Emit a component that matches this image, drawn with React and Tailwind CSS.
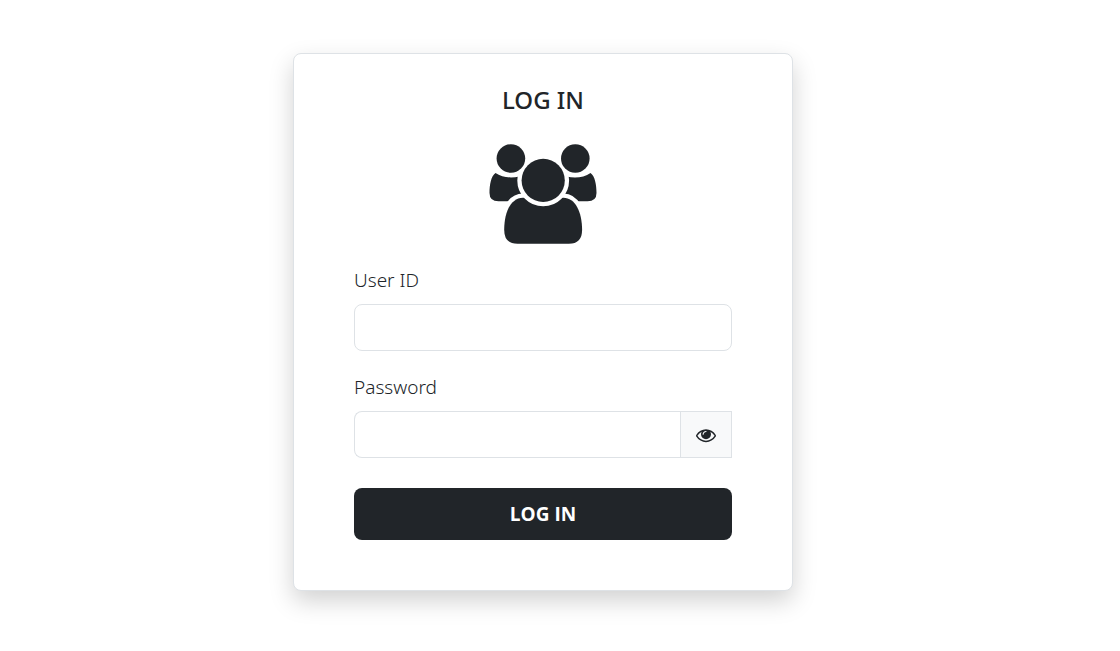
import { useState } from "react";

function UsersLogo() {
  return (
    <svg viewBox="0 0 108 100" className="mx-auto block h-[100px] w-[108px]" fill="currentColor" aria-hidden="true">
      <path d="M6.5 29C2 32 .5 41 .5 49Q.5 57.3 9.5 57.3H40V29H37.5C29 35 15 35 6.5 29Z" />
      <path d="M101.5 29C106 32 107.5 41 107.5 49Q107.5 57.3 98.5 57.3H68V29H70.5C79 35 93 35 101.5 29Z" />
      <g stroke="white" strokeWidth="8.6">
        <circle cx="21.9" cy="14.5" r="14.3" />
        <circle cx="86.3" cy="14.5" r="14.3" />
        <path paintOrder="stroke" d="M34 53.7C22 53.7 15.2 68 15.2 86Q15.2 99.8 28.5 99.8H79.8Q93.1 99.8 93.1 86C93.1 68 86.3 53.7 74.3 53.7Z" />
        <circle cx="54.2" cy="36.4" r="21.6" />
      </g>
      <circle cx="21.9" cy="14.5" r="14.3" />
      <circle cx="86.3" cy="14.5" r="14.3" />
      <circle cx="54.2" cy="36.4" r="21.6" />
    </svg>
  );
}

function EyeIcon() {
  return (
    <svg viewBox="0 0 1792 1792" className="size-5" fill="currentColor" aria-hidden="true">
      <path d="M1664 960q-152-236-381-353 61 104 61 225 0 185-131.5 316.5t-316.5 131.5-316.5-131.5-131.5-316.5q0-121 61-225-229 117-381 353 133 205 333.5 326.5t434.5 121.5 434.5-121.5 333.5-326.5zm-720-384q0-20-14-34t-34-14q-125 0-214.5 89.5t-89.5 214.5q0 20 14 34t34 14 34-14 14-34q0-86 61-147t147-61q20 0 34-14t14-34zm848 384q0 34-20 69-140 230-376.5 368.5t-499.5 138.5-499.5-139-376.5-368q-20-35-20-69t20-69q140-229 376.5-368t499.5-139 499.5 139 376.5 368q20 35 20 69z" />
    </svg>
  );
}

export default function App() {
  const [visible, setVisible] = useState(false);

  return (
    <main className="flex justify-center pt-[53px] pr-[34px] pb-[60px] font-['Noto_Sans','Open_Sans',sans-serif] text-[#212529]">
      <section className="w-full max-w-[500px] rounded-lg border border-[#dee2e6] bg-white px-[60px] pt-[30px] pb-[50px] shadow-[0_10px_24px_rgba(0,0,0,0.18)]">
        <h1 className="text-center text-2xl font-medium">LOG IN</h1>
        <div className="mt-7">
          <UsersLogo />
        </div>
        <form className="mt-5" onSubmit={(event) => event.preventDefault()}>
          <label htmlFor="user-id" className="block text-[19px] leading-8 font-light">User ID</label>
          <input
            id="user-id"
            type="text"
            className="mt-2 block h-[47px] w-full rounded-lg border border-[#dee2e6] bg-white px-4 text-lg"
          />
          <label htmlFor="password" className="mt-5 block text-[19px] leading-8 font-light">Password</label>
          <div className="mt-2 flex h-[47px]">
            <input
              id="password"
              type={visible ? "text" : "password"}
              className="min-w-0 flex-1 rounded-l-lg border border-r-0 border-[#dee2e6] bg-white px-4 text-lg"
            />
            <button
              type="button"
              aria-label="Show password"
              onClick={() => setVisible(!visible)}
              className="flex w-[52px] items-center justify-center border border-[#dee2e6] bg-[#f8f9fa]"
            >
              <EyeIcon />
            </button>
          </div>
          <button type="submit" className="mt-[30px] block h-[52px] w-full rounded-lg bg-[#212529] font-['Open_Sans','Noto_Sans',sans-serif] text-[19px] font-bold text-white">
            LOG IN
          </button>
        </form>
      </section>
    </main>
  );
}
